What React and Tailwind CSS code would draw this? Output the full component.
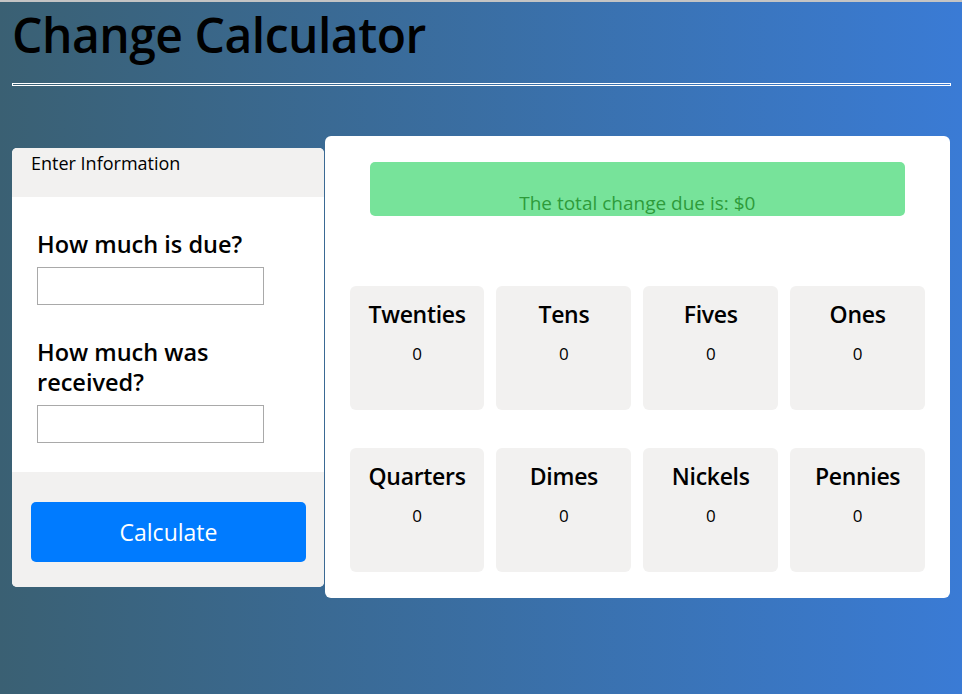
import React from 'react';

const coins = [
  ["Twenties", "Tens", "Fives", "Ones"],
  ["Quarters", "Dimes", "Nickels", "Pennies"],
];

const App = () => {
  return (
    <div
      className="min-h-screen border-t-2 border-[#c4c4c4] bg-gradient-to-r from-[#3a6073] to-[#3a7bd5] px-3 text-black"
      style={{ fontFamily: '"Open Sans", "Noto Sans", sans-serif' }}
    >
      <h1 className="pt-[2px] text-[48px] font-semibold leading-[62px] tracking-[-0.5px]">Change Calculator</h1>
      <hr className="mt-[17px] h-[3px] w-[939px] border border-white" />

      <div className="mt-[50px] flex items-start">
        {/* left form */}
        <div className="mt-[12px] w-[312px] overflow-hidden rounded-[5px] bg-white">
          <div className="h-[49px] bg-[#f2f1f0] px-[19px] pt-[2px] text-[18px] leading-[26px]">
            Enter Information
          </div>
          <div className="h-[275px] px-[25px] pt-[32px]">
            <label className="block text-[23.5px] font-semibold leading-[30px]">How much is due?</label>
            <input type="text" className="mt-[8px] h-[38px] w-[227px] border border-[#a9a9a9]" />
            <label className="mt-[32px] block w-[240px] text-[23.5px] font-semibold leading-[30px]">
              How much was received?
            </label>
            <input type="text" className="mt-[8px] h-[38px] w-[227px] border border-[#a9a9a9]" />
          </div>
          <div className="h-[115px] bg-[#f2f1f0] px-[19px] pt-[30px]">
            <button className="h-[60px] w-[275px] rounded-[5px] bg-[#007bff] text-[23px] text-white">
              Calculate
            </button>
          </div>
        </div>

        {/* right results */}
        <div className="ml-[1px] h-[462px] w-[626px] rounded-[6px] bg-white px-[25px] pt-[26px]">
          <div className="mx-[20px] flex h-[54px] items-end justify-center rounded-[5px] bg-[#77e39a] text-[19px] leading-[26px] text-[#2e9b3a]">
            The total change due is: $0
          </div>
          <div className="mt-[70px] flex flex-col gap-[38px]">
            {coins.map((row, i) => (
              <div key={i} className="grid grid-cols-4 gap-[12px]">
                {row.map((name) => (
                  <div key={name} className="h-[124px] rounded-[6px] bg-[#f2f1f0] pt-[12px] text-center">
                    <div className="text-[23px] font-semibold leading-[32px] tracking-[-0.3px]">{name}</div>
                    <div className="mt-[12px] text-[17px] leading-[24px]">0</div>
                  </div>
                ))}
              </div>
            ))}
          </div>
        </div>
      </div>
    </div>
  );
};

export default App;
